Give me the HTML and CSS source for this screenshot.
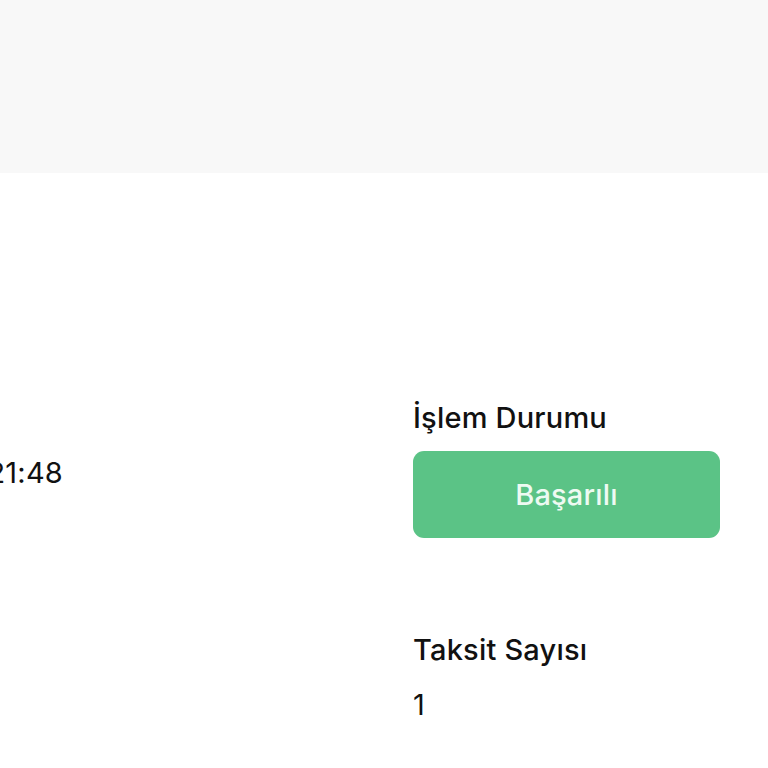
FILE: index.html
```html
<!DOCTYPE html>
<html lang="tr">

<head>
    <meta charset="UTF-8">
    <title>İşlem Detayı</title>
    <link rel="stylesheet" href="styles.css">
</head>

<body>
    <div class="top-bar"></div>

    <div class="details">
        <div class="col col-left">
            <div class="field field-cut">
                <div class="label">İşlem Tarihi</div>
                <div class="value value-end">12.03.2024 14:21:48</div>
            </div>
        </div>
        <div class="col col-right">
            <div class="field">
                <div class="label">İşlem Durumu</div>
                <div class="status">Başarılı</div>
            </div>
            <div class="field">
                <div class="label">Taksit Sayısı</div>
                <div class="value">1</div>
            </div>
        </div>
    </div>
</body>

</html>
```

FILE: styles.css
```css
body {
    margin: 0;
    background-color: #fff;
    font-family: "Inter", "Noto Sans", sans-serif;
    color: #111;
    overflow: hidden;
}

.top-bar {
    height: 173px;
    background-color: #f8f8f8;
}

.details {
    display: flex;
    padding-top: 227px;
}

.col-left {
    width: 413px;
}

.col-right {
    width: 307px;
}

.field {
    margin-bottom: 94px;
}

.field:last-child {
    margin-bottom: 0;
}

/* left column starts off-screen */
.field-cut {
    margin-left: -300px;
}

.value-end {
    width: 363px;
    display: flex;
    justify-content: flex-end;
    margin-top: 17px;
}

.label {
    font-size: 29px;
    line-height: 36px;
    font-weight: 500;
    letter-spacing: 0.2px;
    white-space: nowrap;
}

.value {
    font-size: 29px;
    line-height: 36px;
    margin-top: 19px;
    white-space: nowrap;
    letter-spacing: 0.2px;
}

.status {
    margin-top: 15px;
    height: 87px;
    border-radius: 11px;
    background-color: #5bc386;
    color: #eefaf2;
    font-size: 29px;
    font-weight: 500;
    display: flex;
    align-items: center;
    justify-content: center;
    letter-spacing: 0.2px;
}
```
